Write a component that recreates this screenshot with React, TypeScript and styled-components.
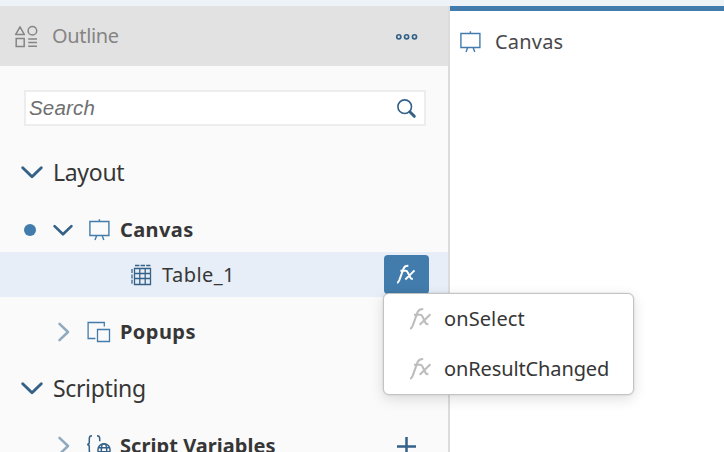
import React from "react";
import styled, { createGlobalStyle } from "styled-components";

const GlobalStyle = createGlobalStyle`
  *, *::before, *::after { box-sizing: border-box; }
  html, body { margin: 0; overflow: hidden; background: #fff; }
  svg { display: block; flex: none; overflow: visible; }
`;

const Page = styled.div`
  width: 724px;
  height: 452px;
  overflow: hidden;
  display: flex;
  flex-direction: column;
  background: #fff;
  font-family: "Noto Sans", "Open Sans", sans-serif;
  color: #333;
`;

const TopStrip = styled.div`
  flex: none;
  height: 6px;
  background: #eef3f7;
`;

const Body = styled.div`
  flex: none;
  height: 446px;
  display: grid;
  grid-template-columns: 450px 1fr;
`;

const Sidebar = styled.aside`
  height: 446px;
  background: #fafafa;
  border-right: 2px solid #dcdcdc;
  display: flex;
  flex-direction: column;
`;

const Header = styled.header`
  flex: none;
  height: 60px;
  padding: 0 30px 0 14px;
  display: flex;
  align-items: center;
  background: #e2e2e2;
`;

const Label = styled.span<{ $size?: number; $weight?: number; $track?: number; $color?: string; $gap?: number }>`
  font-size: ${(p) => p.$size ?? 20}px;
  font-weight: ${(p) => p.$weight ?? 400};
  letter-spacing: ${(p) => p.$track ?? 0}px;
  color: ${(p) => p.$color ?? "#363636"};
  margin-left: ${(p) => p.$gap ?? 0}px;
  line-height: 28px;
  white-space: nowrap;
`;

const Push = styled.div`
  margin-left: auto;
`;

const SearchBox = styled.label`
  flex: none;
  height: 36px;
  margin: 24px 22px 17px 24px;
  padding: 0 8px 0 3px;
  border: 2px solid #ededed;
  background: #fff;
  display: flex;
  align-items: center;
  justify-content: space-between;
`;

const SearchInput = styled.input`
  width: 300px;
  padding: 0;
  border: 0;
  outline: 0;
  background: transparent;
  font: italic 20.5px/28px "Liberation Sans", Arial, sans-serif;
  letter-spacing: 0.2px;
  &::placeholder { color: #6f6f6f; opacity: 1; }
`;

const Section = styled.div`
  flex: none;
  height: 58px;
  padding: 0 0 0 21px;
  display: flex;
  align-items: center;
`;

const Row = styled.div<{ $height: number; $top?: number; $left: number; $right?: number; $bottom?: number; $selected?: boolean }>`
  flex: none;
  height: ${(p) => p.$height}px;
  margin-top: ${(p) => p.$top ?? 0}px;
  margin-bottom: ${(p) => p.$bottom ?? 0}px;
  padding: 0 ${(p) => p.$right ?? 19}px 0 ${(p) => p.$left}px;
  display: flex;
  align-items: center;
  background: ${(p) => (p.$selected ? "#e7eef7" : "transparent")};
`;

const Dot = styled.i`
  width: 12px;
  height: 12px;
  margin-right: 17px;
  border-radius: 50%;
  background: #427cac;
`;

const IconSlot = styled.div<{ $gap: number }>`
  margin-left: ${(p) => p.$gap}px;
`;

const MenuAnchor = styled.div`
  position: relative;
  margin-left: auto;
`;

const FxButton = styled.button`
  width: 45px;
  height: 39px;
  padding: 0;
  border: 0;
  border-radius: 4px;
  background: #427cac;
  display: grid;
  place-items: center;
`;

const Menu = styled.div`
  position: absolute;
  z-index: 2;
  top: 38px;
  left: -1px;
  width: 251px;
  height: 102px;
  border: 1px solid #c3c3c3;
  border-radius: 6px;
  background: #fff;
  box-shadow: 0 4px 14px rgba(0, 0, 0, 0.13), 0 0 2px rgba(0, 0, 0, 0.15);
`;

const MenuItem = styled.div`
  height: 50px;
  padding-left: 26px;
  display: flex;
  align-items: center;
`;

const Workspace = styled.main`
  border-top: 5px solid #427cac;
  background: #fff;
`;

const WorkspaceTitle = styled.div`
  height: 61px;
  padding: 0 0 0 9px;
  display: flex;
  align-items: center;
`;

const BLUE = "#346187";
const LINE = "#427cac";

const Chevron = ({ size = 22 }: { size?: number }) => (
  <svg width={size} height={size} viewBox="0 0 22 22" fill="none" stroke={BLUE} strokeWidth="2.9" strokeLinecap="round" strokeLinejoin="round">
    <path d="M1.7 6.7 11 15.7 20.3 6.7" />
  </svg>
);

const ChevronRight = () => (
  <svg width="12" height="20" viewBox="0 0 12 20" fill="none" stroke="#8fa9bf" strokeWidth="2.5" strokeLinecap="round" strokeLinejoin="round">
    <path d="M2.5 1.8 11 10 2.5 18.2" />
  </svg>
);

const OutlineIcon = () => (
  <svg width="24" height="22" viewBox="0 0 24 22" fill="none" stroke="#858585" strokeWidth="1.5">
    <path d="M6 1.8 10.4 9.6H1.6Z" strokeLinejoin="round" />
    <circle cx="18.4" cy="5.8" r="4.3" />
    <path d="M2.2 13.6h8v8h-8zM14.2 14H23M14.2 17.6H23M14.2 21.2H23" />
  </svg>
);

const MoreIcon = () => (
  <svg width="22" height="6" viewBox="0 0 22 6" fill="none" stroke={BLUE} strokeWidth="1.7">
    <circle cx="2.8" cy="3.8" r="2.05" />
    <circle cx="10.6" cy="3.8" r="2.05" />
    <circle cx="18.5" cy="3.8" r="2.05" />
  </svg>
);

const SearchIcon = () => (
  <svg width="20" height="20" viewBox="0 0 20 20" fill="none" stroke={BLUE}>
    <circle cx="8.7" cy="8.7" r="6.8" strokeWidth="1.6" />
    <path d="M13.8 13.8 18.3 18.3" strokeWidth="3" strokeLinecap="round" />
  </svg>
);

const CanvasIcon = () => (
  <svg width="22" height="22" viewBox="0 0 22 22" fill="none" stroke={LINE} strokeWidth="1.4">
    <path d="M1.9 2.5h19v14h-19zM11.4 .3v2.2M8.7 16.5 7 21M14.1 16.5 15.8 21" />
  </svg>
);

const TableIcon = () => (
  <svg width="22" height="22" viewBox="0 0 22 22" fill="none" stroke={BLUE} strokeWidth="1.3">
    <path d="M4.5 4.5h16v16h-16zM9.8 4.5v16M15.2 4.5v16M4.5 9.5h16M4.5 14.5h16" />
    <path d="M5 1.5h4.4M10.6 1.5H15M16.2 1.5h4.2" />
    <path d="M2 5v4M2 10.4v4M2 15.8v4" stroke="#7397b5" strokeWidth="2" />
  </svg>
);

const PopupsIcon = () => (
  <svg width="24" height="22" viewBox="0 0 24 22" fill="none" stroke={LINE} strokeWidth="1.3">
    <path d="M18.3 5.6V1.5H2.1v16h7.3M11.5 8.5h12v12h-12z" />
  </svg>
);

const VariablesIcon = () => (
  <svg width="26" height="22" viewBox="0 0 26 22" fill="none" stroke={BLUE} strokeWidth="1.5">
    <path d="M7 .8C4.8.8 4.3 1.8 4.3 3.5v3.7c0 1.5-.8 2.2-2.2 2.2 1.4 0 2.2.8 2.2 2.3v4c0 1.7.5 2.5 2.7 2.5M12 .8c2.2 0 2.7 1 2.7 2.7v2.8" />
    <circle cx="19" cy="14.9" r="6.1" />
    <ellipse cx="19" cy="14.9" rx="2.7" ry="6.1" />
    <path d="M13.5 12.8h11M13.2 16.7h11.6" />
  </svg>
);

const FxIcon = ({ color, scale = 1, weight = 2.1 }: { color: string; scale?: number; weight?: number }) => (
  <svg width={21 * scale} height={22 * scale} viewBox="0 0 21 22" fill="none" stroke={color} strokeWidth={weight}>
    <path d="M0 20.6c1.4 0 1.9-.9 2.7-2.9L7.6 4.2C8.5 1.8 9.6 .9 13.2 1M4 6.8h6.2c1 0 1.6.4 2.1 1.5l3.2 6.4c.5 1.1 1.2 1.6 2.9 1.6M20.4 6.2 9.7 16.8" />
  </svg>
);

const PlusIcon = () => (
  <svg width="19" height="19" viewBox="0 0 19 19" fill="none" stroke={BLUE} strokeWidth="2.5">
    <path d="M9.5 0v19M0 9.5h19" />
  </svg>
);

export default function App() {
  return (
    <>
      <GlobalStyle />
      <Page>
        <TopStrip />
        <Body>
          <Sidebar>
            <Header>
              <OutlineIcon />
              <Label $color="#858585" $gap={14} $track={-0.35}>Outline</Label>
              <Push><MoreIcon /></Push>
            </Header>
            <SearchBox>
              <SearchInput placeholder="Search" />
              <SearchIcon />
            </SearchBox>
            <Section>
              <Chevron />
              <Label $size={23} $gap={10} $track={-0.3}>Layout</Label>
            </Section>
            <Row $height={44} $top={7} $left={24}>
              <Dot />
              <Chevron size={20} />
              <IconSlot $gap={15}><CanvasIcon /></IconSlot>
              <Label $weight={700} $gap={10} $track={0.4}>Canvas</Label>
            </Row>
            <Row $height={45} $left={130} $selected>
              <TableIcon />
              <Label $gap={10} $track={0.45}>Table_1</Label>
              <MenuAnchor>
                <FxButton aria-label="Script"><FxIcon color="#fff" scale={0.86} weight={2.3} /></FxButton>
                <Menu>
                  <MenuItem><FxIcon color="#bdbdbd" /><Label $gap={13} $track={0.1}>onSelect</Label></MenuItem>
                  <MenuItem><FxIcon color="#bdbdbd" /><Label $gap={13} $track={-0.12}>onResultChanged</Label></MenuItem>
                </Menu>
              </MenuAnchor>
            </Row>
            <Row $height={46} $top={12} $left={57} $bottom={4}>
              <ChevronRight />
              <IconSlot $gap={17}><PopupsIcon /></IconSlot>
              <Label $weight={700} $gap={10} $track={0.45}>Popups</Label>
            </Row>
            <Section>
              <Chevron />
              <Label $size={23} $gap={10} $track={-0.35}>Scripting</Label>
            </Section>
            <Row $height={46} $top={6} $left={57} $right={32}>
              <ChevronRight />
              <IconSlot $gap={16}><VariablesIcon /></IconSlot>
              <Label $weight={700} $gap={9} $track={0.05}>Script Variables</Label>
              <Push><PlusIcon /></Push>
            </Row>
          </Sidebar>
          <Workspace>
            <WorkspaceTitle>
              <CanvasIcon />
              <Label $color="#48484b" $gap={14} $track={0.2}>Canvas</Label>
            </WorkspaceTitle>
          </Workspace>
        </Body>
      </Page>
    </>
  );
}
